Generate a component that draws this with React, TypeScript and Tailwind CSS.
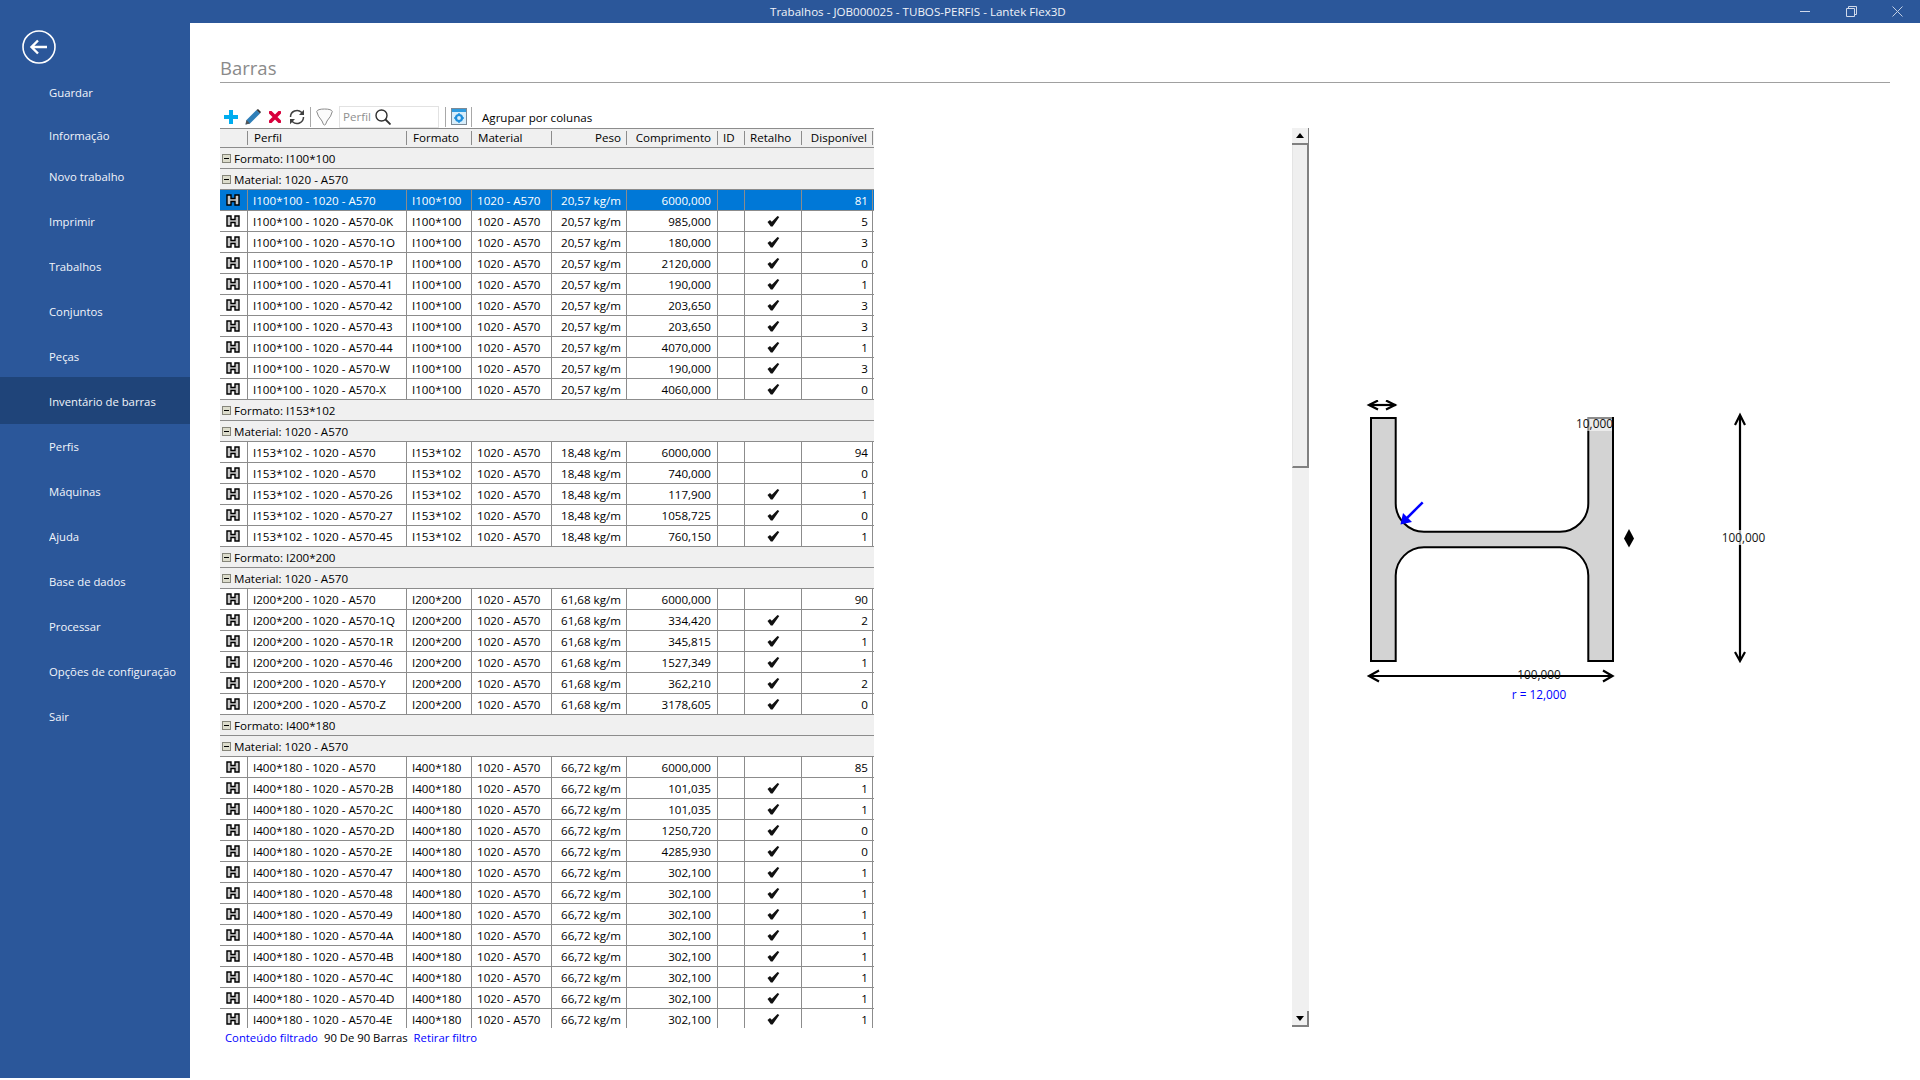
import React from "react";

type Row = { name: string; fmt: string; peso: string; len: string; check: boolean; disp: number };

const mk = (fmt: string, peso: string, items: [string, string, number][]): Row[] =>
  items.map(([s, len, disp]) => ({
    name: `${fmt} - 1020 - A570${s}`,
    fmt,
    peso,
    len,
    check: s !== "",
    disp,
  }));

const groups: { fmt: string; rows: Row[] }[] = [
  {
    fmt: "I100*100",
    rows: mk("I100*100", "20,57 kg/m", [
      ["", "6000,000", 81],
      ["-0K", "985,000", 5],
      ["-1O", "180,000", 3],
      ["-1P", "2120,000", 0],
      ["-41", "190,000", 1],
      ["-42", "203,650", 3],
      ["-43", "203,650", 3],
      ["-44", "4070,000", 1],
      ["-W", "190,000", 3],
      ["-X", "4060,000", 0],
    ]),
  },
  {
    fmt: "I153*102",
    rows: mk("I153*102", "18,48 kg/m", [
      ["", "6000,000", 94],
      ["", "740,000", 0],
      ["-26", "117,900", 1],
      ["-27", "1058,725", 0],
      ["-45", "760,150", 1],
    ]),
  },
  {
    fmt: "I200*200",
    rows: mk("I200*200", "61,68 kg/m", [
      ["", "6000,000", 90],
      ["-1Q", "334,420", 2],
      ["-1R", "345,815", 1],
      ["-46", "1527,349", 1],
      ["-Y", "362,210", 2],
      ["-Z", "3178,605", 0],
    ]),
  },
  {
    fmt: "I400*180",
    rows: mk("I400*180", "66,72 kg/m", [
      ["", "6000,000", 85],
      ["-2B", "101,035", 1],
      ["-2C", "101,035", 1],
      ["-2D", "1250,720", 0],
      ["-2E", "4285,930", 0],
      ["-47", "302,100", 1],
      ["-48", "302,100", 1],
      ["-49", "302,100", 1],
      ["-4A", "302,100", 1],
      ["-4B", "302,100", 1],
      ["-4C", "302,100", 1],
      ["-4D", "302,100", 1],
      ["-4E", "302,100", 1],
    ]),
  },
];

const menu = [
  { label: "Guardar", cls: "h-[44px] pt-px" },
  { label: "Informação", cls: "h-[42px]" },
  { label: "Novo trabalho", cls: "h-[42px] pb-[2px]" },
  { label: "Imprimir", cls: "h-[45px] pt-[2px]" },
  { label: "Trabalhos", cls: "h-[45px] pt-[2px]" },
  { label: "Conjuntos", cls: "h-[45px] pt-[2px]" },
  { label: "Peças", cls: "h-[43px] pt-[3px]" },
  { label: "Inventário de barras", cls: "h-[47px] pt-[3px] bg-[#1f4479]" },
  { label: "Perfis", cls: "h-[45px] pt-[2px]" },
  { label: "Máquinas", cls: "h-[45px] pt-[2px]" },
  { label: "Ajuda", cls: "h-[45px] pt-[2px]" },
  { label: "Base de dados", cls: "h-[45px] pt-[2px]" },
  { label: "Processar", cls: "h-[45px] pt-[2px]" },
  { label: "Opções de configuração", cls: "h-[45px] pt-[2px]" },
  { label: "Sair", cls: "h-[45px] pt-[2px]" },
];

const HIcon = () => (
  <svg width="14" height="12" viewBox="0 0 14 12" className="-mt-[1px]">
    <path
      d="M1 1h4v3.5h4V1h4v10H9V7.5H5V11H1z"
      fill="#c9c9c9"
      stroke="#000"
      strokeWidth="1.4"
    />
  </svg>
);

const Check = () => (
  <svg width="13" height="11" viewBox="0 0 13 11">
    <path d="M0.5 6 L3 4 L4.8 5.8 L10.5 0 L12.3 1 L5.6 10.5 L3.8 10.5 Z" fill="#111" />
  </svg>
);

const Toggle = () => (
  <span className="flex h-[9px] w-[9px] items-center justify-center border border-[#85857a] bg-[#dcdccc]">
    <span className="h-px w-[5px] bg-black" />
  </span>
);

const GroupRow = ({ text }: { text: string }) => (
  <div className="flex h-[21px] items-center gap-[3px] border-b border-[#8c8c8c] bg-[#f0f0f0] pl-[2px]">
    <Toggle />
    <span className="pt-[1px]">{text}</span>
  </div>
);

const lineCell = "flex h-full shrink-0 items-center border-r border-[#8c8c8c] pt-[1px]";

const DataRow = ({ r, selected }: { r: Row; selected: boolean }) => (
  <div
    className={
      selected
        ? "flex h-[21px] border-b border-[#8c8c8c] bg-[#0078d7] text-white"
        : "flex h-[21px] border-b border-[#8c8c8c]"
    }
  >
    <div className={`${lineCell} w-[28px] justify-center pr-[1px]`}>
      <HIcon />
    </div>
    <div className={`${lineCell} w-[159px] pl-[5px]`}>{r.name}</div>
    <div className={`${lineCell} w-[65px] pl-[5px]`}>{r.fmt}</div>
    <div className={`${lineCell} w-[80px] pl-[5px]`}>1020 - A570</div>
    <div className={`${lineCell} w-[75px] justify-end pr-[5px]`}>{r.peso}</div>
    <div className={`${lineCell} w-[91px] justify-end pr-[6px]`}>{r.len}</div>
    <div className={`${lineCell} w-[27px]`} />
    <div className={`${lineCell} w-[57px] justify-center`}>{r.check ? <Check /> : null}</div>
    <div className={`${lineCell} w-[71px] justify-end pr-[4px]`}>{r.disp}</div>
  </div>
);

const headCell = "flex h-full shrink-0 items-center";
const Sep = () => <span className="h-[14px] w-px shrink-0 bg-[#8c8c8c]" />;

const HeaderRow = () => (
  <div className="flex h-[20px] items-center border-y border-[#8c8c8c] bg-[#f0f0f0]">
    <div className="h-full w-[27px] shrink-0" />
    <Sep />
    <div className={`${headCell} w-[158px] pl-[6px]`}>Perfil</div>
    <Sep />
    <div className={`${headCell} w-[64px] pl-[6px]`}>Formato</div>
    <Sep />
    <div className={`${headCell} w-[79px] pl-[6px]`}>Material</div>
    <Sep />
    <div className={`${headCell} w-[74px] justify-end pr-[5px]`}>Peso</div>
    <Sep />
    <div className={`${headCell} w-[90px] justify-end pr-[6px]`}>Comprimento</div>
    <Sep />
    <div className={`${headCell} w-[26px] pl-[5px]`}>ID</div>
    <Sep />
    <div className={`${headCell} w-[56px] pl-[5px]`}>Retalho</div>
    <Sep />
    <div className={`${headCell} w-[70px] justify-end pr-[5px]`}>Disponível</div>
    <Sep />
  </div>
);

const ToolSep = ({ cls }: { cls: string }) => <span className={`h-[20px] w-px bg-[#a8a8a8] ${cls}`} />;

const Toolbar = () => (
  <div className="flex h-[23px] items-center">
    <svg width="14" height="14" viewBox="0 0 14 14" className="ml-[4px]">
      <path d="M7 0v14M0 7h14" stroke="#00adef" strokeWidth="4" />
    </svg>
    <svg width="16" height="16" viewBox="0 0 16 16" className="ml-[7px]">
      <path d="M0.5 15.5 L1.5 11 L11.5 1 L15 4.5 L5 14.5 Z" fill="#2f7fb8" />
      <path d="M1.5 11 L5 14.5 L0.5 15.5 Z" fill="#555" />
      <path d="M11.5 1 L13 0 L16 3 L15 4.5 Z" fill="#333" />
    </svg>
    <svg width="12" height="12" viewBox="0 0 12 12" className="ml-[8px]">
      <path d="M1.5 1.5L10.5 10.5M10.5 1.5L1.5 10.5" stroke="#d8003c" strokeWidth="3.6" strokeLinecap="round" />
    </svg>
    <svg width="16" height="16" viewBox="0 0 16 16" className="ml-[8px]" fill="none">
      <path d="M1.5 8a6.5 6.5 0 0 1 11-4.7l1 1" stroke="#404040" strokeWidth="1.5" />
      <path d="M14.5 8a6.5 6.5 0 0 1-11 4.7l-1-1" stroke="#404040" strokeWidth="1.5" />
      <path d="M15 0.8V6H10Z" fill="#404040" />
      <path d="M1 15.2V10H6Z" fill="#404040" />
    </svg>
    <ToolSep cls="ml-[5px]" />
    <svg width="17" height="18" viewBox="0 0 17 18" className="ml-[5px]" fill="none">
      <path d="M0.7 3.5 Q1.5 1 8.5 1 Q15.5 1 16.3 3.5 Q15.5 8 11 13 L9.5 16.5 Q8.5 17.5 7.5 16.5 L6 13 Q1.5 8 0.7 3.5 Z" fill="#fbfbfb" stroke="#8a8a8a" strokeWidth="1" />
    </svg>
    <div className="ml-[6px] flex h-[22px] w-[100px] items-center border border-[#e2e2e2] pl-[3px]">
      <span className="pt-[1px] text-[#8f8f8f]">Perfil</span>
      <svg width="16" height="16" viewBox="0 0 16 16" className="ml-[4px]" fill="none">
        <circle cx="6.5" cy="6.5" r="5.5" stroke="#303030" strokeWidth="1.4" />
        <path d="M10.5 10.5L15.5 15.5" stroke="#303030" strokeWidth="1.8" />
      </svg>
    </div>
    <ToolSep cls="ml-[6px]" />
    <svg width="16" height="17" viewBox="0 0 16 17" className="ml-[5px]">
      <rect x="0.5" y="0.5" width="15" height="16" fill="#d8eefb" stroke="#7c8a96" />
      <rect x="1" y="1" width="14" height="3" fill="#2f9ce0" />
      <circle cx="8" cy="10" r="3" fill="none" stroke="#1f8fdc" strokeWidth="2.2" />
      <path d="M8 5v1.6M8 13.4v1.6M3 10h1.6M11.4 10h1.6" stroke="#1f8fdc" strokeWidth="1.4" />
    </svg>
    <ToolSep cls="ml-[4px]" />
    <span className="ml-[10px] pt-[3px]">Agrupar por colunas</span>
  </div>
);

const Triangle = ({ up }: { up: boolean }) => (
  <svg width="8" height="5" viewBox="0 0 8 5">
    <path d={up ? "M4 0L8 5H0Z" : "M4 5L8 0H0Z"} fill="#000" />
  </svg>
);

const Scrollbar = () => (
  <div className="ml-[418px] mt-[23px] flex h-[899px] w-[17px] flex-col justify-between bg-[#f0f0f0]">
    <div>
      <div className="flex h-[17px] w-[17px] items-center justify-center border-b-2 border-r border-[#808080] bg-[#f1f1f1]">
        <Triangle up />
      </div>
      <div className="h-[323px] w-[17px] border-b-2 border-l border-r-2 border-b-[#808080] border-l-[#e4e4e4] border-r-[#808080] bg-[#efefef]" />
    </div>
    <div className="flex h-[16px] w-[17px] items-center justify-center border-b-2 border-r-2 border-[#808080] bg-[#f1f1f1]">
      <Triangle up={false} />
    </div>
  </div>
);

const Drawing = () => (
  <svg width="430" height="310" viewBox="1340 400 430 310" className="ml-[31px] mt-[295px] shrink-0" fill="none">
    <path
      d="M1371 418 H1395.7 V503 A28.5 28.5 0 0 0 1424 531.7 H1560 A28.5 28.5 0 0 0 1588.3 503 V418 H1613 V661 H1588.3 V575.5 A28.5 28.5 0 0 0 1560 547.3 H1424 A28.5 28.5 0 0 0 1395.7 575.5 V661 H1371 Z"
      fill="#d3d3d3"
      stroke="#000"
      strokeWidth="2"
    />
    <g stroke="#000" strokeWidth="2.2">
      <path d="M1369 405H1396" />
      <path d="M1378 400.5L1369 405L1378 409.5M1386 400.5L1395 405L1386 409.5" />
      <path d="M1369 676H1612" />
      <path d="M1379 670.5L1369 676L1379 681.5M1603 670.5L1612.5 676L1603 681.5" />
      <path d="M1740 416V660" />
      <path d="M1735 425L1740 415L1745 425M1735 652L1740 661L1745 652" />
    </g>
    <path d="M1629 529L1634 538.5L1629 547.5L1624 538.5Z" fill="#000" />
    <path d="M1422.7 502.3L1403 522" stroke="#0000ff" strokeWidth="2.5" />
    <path d="M1400.5 524.5L1403 513L1412 522Z" fill="#0000ff" />
    <rect x="1577" y="417" width="35" height="14" fill="#ffffff" fillOpacity="0.55" />
    <rect x="1724" y="530" width="40" height="15" fill="#ffffff" fillOpacity="0.7" />
    <text x="1594.5" y="427.5" textAnchor="middle" fontSize="11.8" fill="#111">10,000</text>
    <text x="1539" y="678.5" textAnchor="middle" fontSize="11.8" fill="#111">100,000</text>
    <text x="1539" y="699" textAnchor="middle" fontSize="11.8" fill="#0000ff">r = 12,000</text>
    <text x="1743.5" y="541.5" textAnchor="middle" fontSize="11.8" fill="#111">100,000</text>
  </svg>
);

export default function App() {
  let first = true;
  return (
    <div className="h-[1080px] w-[1920px] overflow-hidden bg-white font-['Open_Sans',sans-serif] text-[11.6px] text-black">
      <div className="flex h-[23px] items-center bg-[#2b579a] text-[#f0f3f8]">
        <span className="ml-[770px]">Trabalhos - JOB000025 - TUBOS-PERFIS - Lantek Flex3D</span>
        <div className="ml-auto flex items-center">
          <span className="mr-[36px] h-px w-[10px] bg-[#d0d9ea]" />
          <svg width="11" height="11" viewBox="0 0 11 11" fill="none" className="mr-[35px]">
            <path d="M2.5 2.5V.5H10.5V8.5H8.5M.5 2.5H8.5V10.5H.5Z" stroke="#d0d9ea" />
          </svg>
          <svg width="11" height="11" viewBox="0 0 11 11" fill="none" className="mr-[17px]">
            <path d="M.5 .5L10.5 10.5M10.5 .5L.5 10.5" stroke="#c2cfe4" />
          </svg>
        </div>
      </div>

      <div className="flex h-[1055px]">
        <aside className="w-[190px] shrink-0 bg-[#2b579a] text-[11.3px] text-[#f2f5fa]">
          <div className="ml-[22px] mt-[7px] h-[41px]">
            <svg width="34" height="34" viewBox="0 0 34 34" fill="none">
              <circle cx="17" cy="17" r="16" stroke="#fff" strokeWidth="1.6" />
              <path d="M9.5 17H25M16 10.5L9.5 17L16 23.5" stroke="#fff" strokeWidth="2.4" />
            </svg>
          </div>
          {menu.map((m) => (
            <div key={m.label} className={`flex items-center overflow-hidden pl-[49px] ${m.cls}`}>
              <span className="block w-[127px] overflow-hidden whitespace-nowrap">{m.label}</span>
            </div>
          ))}
        </aside>

        <main className="min-w-0 flex-1 pl-[30px] pr-[30px]">
          <div className="flex h-[60px] items-end border-b border-[#a0a0a0] pb-px">
            <h1 className="text-[18.5px] font-normal leading-[26px] text-[#8a8a8a]">Barras</h1>
          </div>
          <div className="mt-[22px] flex">
            <div className="w-[654px] shrink-0">
              <Toolbar />
              <div className="h-[900px] overflow-hidden">
                <HeaderRow />
                {groups.map((g) => (
                  <div key={g.fmt}>
                    <GroupRow text={`Formato: ${g.fmt}`} />
                    <GroupRow text="Material: 1020 - A570" />
                    {g.rows.map((r, i) => {
                      const sel = first;
                      first = false;
                      return <DataRow key={i} r={r} selected={sel} />;
                    })}
                  </div>
                ))}
              </div>
              <div className="flex h-[20px] items-center pl-[5px] pt-[1px] text-[11.3px]">
                <span className="text-[#0000ff]">Conteúdo filtrado</span>
                <span className="ml-[6px]">90 De 90 Barras</span>
                <span className="ml-[6px] text-[#0000ff]">Retirar filtro</span>
              </div>
            </div>
            <Scrollbar />
            <Drawing />
          </div>
        </main>
      </div>
    </div>
  );
}
